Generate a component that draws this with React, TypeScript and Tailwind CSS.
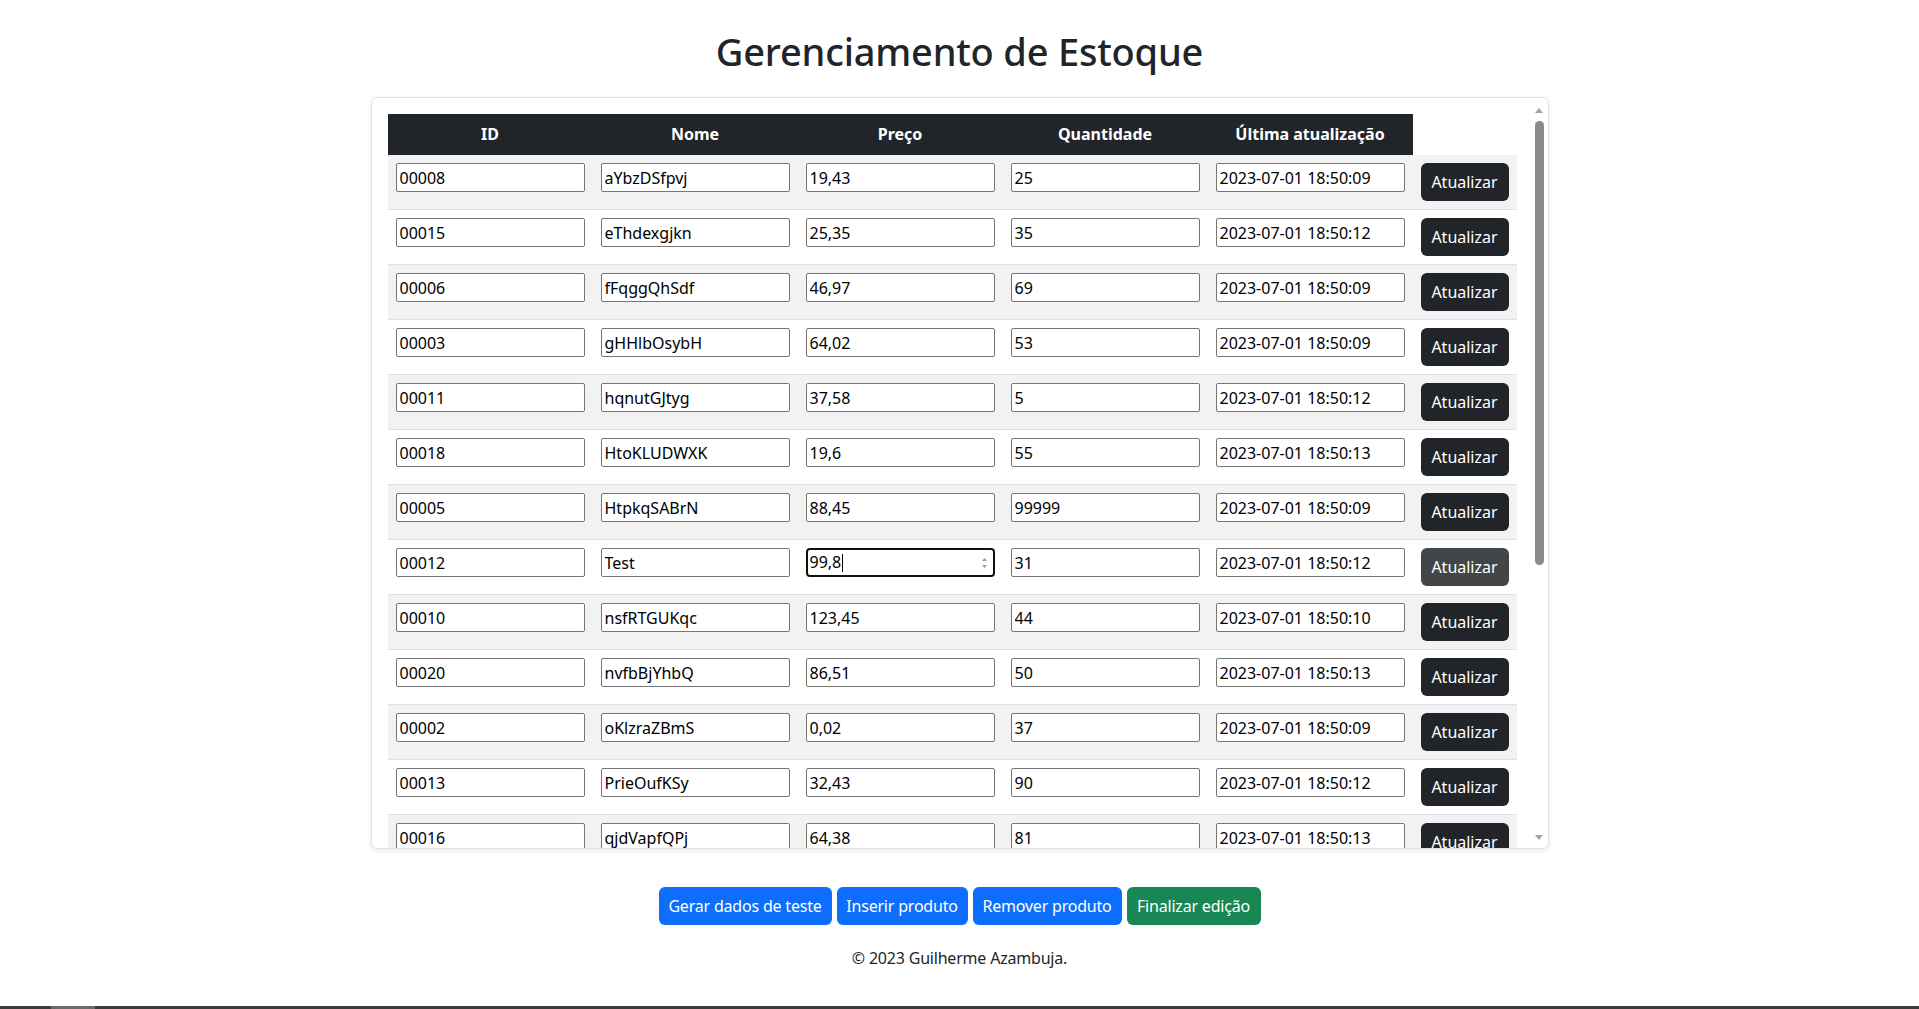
import React from 'react';

type Produto = {
  id: string;
  nome: string;
  preco: string;
  qtd: string;
  data: string;
};

const produtos: Produto[] = [
  { id: '00008', nome: 'aYbzDSfpvj', preco: '19,43', qtd: '25', data: '2023-07-01 18:50:09' },
  { id: '00015', nome: 'eThdexgjkn', preco: '25,35', qtd: '35', data: '2023-07-01 18:50:12' },
  { id: '00006', nome: 'fFqggQhSdf', preco: '46,97', qtd: '69', data: '2023-07-01 18:50:09' },
  { id: '00003', nome: 'gHHlbOsybH', preco: '64,02', qtd: '53', data: '2023-07-01 18:50:09' },
  { id: '00011', nome: 'hqnutGJtyg', preco: '37,58', qtd: '5', data: '2023-07-01 18:50:12' },
  { id: '00018', nome: 'HtoKLUDWXK', preco: '19,6', qtd: '55', data: '2023-07-01 18:50:13' },
  { id: '00005', nome: 'HtpkqSABrN', preco: '88,45', qtd: '99999', data: '2023-07-01 18:50:09' },
  { id: '00012', nome: 'Test', preco: '99,8', qtd: '31', data: '2023-07-01 18:50:12' },
  { id: '00010', nome: 'nsfRTGUKqc', preco: '123,45', qtd: '44', data: '2023-07-01 18:50:10' },
  { id: '00020', nome: 'nvfbBjYhbQ', preco: '86,51', qtd: '50', data: '2023-07-01 18:50:13' },
  { id: '00002', nome: 'oKlzraZBmS', preco: '0,02', qtd: '37', data: '2023-07-01 18:50:09' },
  { id: '00013', nome: 'PrieOufKSy', preco: '32,43', qtd: '90', data: '2023-07-01 18:50:12' },
  { id: '00016', nome: 'qjdVapfQPj', preco: '64,38', qtd: '81', data: '2023-07-01 18:50:13' },
];

const headers = ['ID', 'Nome', 'Preço', 'Quantidade', 'Última atualização'];

// the row being edited in the screenshot
const FOCUSED_ID = '00012';

function Campo({ value }: { value: string }) {
  return (
    <input
      readOnly
      defaultValue={value}
      className="block h-[29px] w-[189px] rounded-[2px] border border-[#767676] bg-white px-[3px] pt-px text-[16px] leading-[21px] text-black outline-none"
    />
  );
}

function CampoFocado({ value }: { value: string }) {
  return (
    <div className="flex h-[29px] w-[189px] items-center rounded-[4px] border-2 border-[#101010] bg-white pt-px pl-[2px] pr-[5px] text-[16px] leading-[21px] text-black">
      <span>{value}</span>
      <span className="ml-px h-[18px] w-px bg-black" />
      <span className="flex-1" />
      <svg width="7" height="14" viewBox="0 0 7 14" className="text-[#9a9a9a]">
        <path d="M3.5 2 L6 5 L1 5 Z" fill="currentColor" />
        <path d="M3.5 12 L6 9 L1 9 Z" fill="currentColor" />
      </svg>
    </div>
  );
}

function Scrollbar() {
  return (
    <div className="flex w-[17px] flex-col items-center pt-[10px] pb-[8px]">
      <svg width="8" height="5" viewBox="0 0 8 5" className="text-[#a3a3a3]">
        <path d="M4 0 L8 5 L0 5 Z" fill="currentColor" />
      </svg>
      <div className="mt-[8px] h-[444px] w-[9px] rounded-full bg-[#8a8a8a]" />
      <div className="flex-1" />
      <svg width="8" height="5" viewBox="0 0 8 5" className="text-[#a3a3a3]">
        <path d="M0 0 L8 0 L4 5 Z" fill="currentColor" />
      </svg>
    </div>
  );
}

export default function App() {
  return (
    <div className="flex h-[1009px] flex-col overflow-hidden bg-white font-['Noto_Sans','Open_Sans',sans-serif] text-[#212529]">
      <h1 className="mt-[27px] mb-[22px] text-center text-[38px] font-medium leading-[48px] tracking-[-0.2px]">
        Gerenciamento de Estoque
      </h1>

      {/* Tabela de produtos */}
      <div className="mx-auto flex h-[752px] w-[1178px] shrink-0 overflow-hidden rounded-md border border-[#dee2e6] bg-white shadow-[0_2px_4px_rgba(0,0,0,0.08)]">
        <div className="flex-1 overflow-hidden pt-4 pl-4">
          <table className="w-[1129px] table-fixed border-collapse">
            <colgroup>
              <col className="w-[205px]" />
              <col className="w-[205px]" />
              <col className="w-[205px]" />
              <col className="w-[205px]" />
              <col className="w-[205px]" />
              <col className="w-[104px]" />
            </colgroup>
            <thead>
              <tr>
                {headers.map((h) => (
                  <th
                    key={h}
                    className="border-b border-[#212529] bg-[#212529] px-2 py-2 text-center text-[16px] leading-6 font-bold text-white"
                  >
                    {h}
                  </th>
                ))}
                <th />
              </tr>
            </thead>
            <tbody>
              {produtos.map((p, i) => {
                const focado = p.id === FOCUSED_ID;
                return (
                  <tr
                    key={p.id}
                    className={
                      i % 2 === 0
                        ? 'border-b border-[#dee2e6] bg-[#f2f2f2]'
                        : 'border-b border-[#dee2e6] bg-white'
                    }
                  >
                    <td className="p-2 align-top">
                      <Campo value={p.id} />
                    </td>
                    <td className="p-2 align-top">
                      <Campo value={p.nome} />
                    </td>
                    <td className="p-2 align-top">
                      {focado ? <CampoFocado value={p.preco} /> : <Campo value={p.preco} />}
                    </td>
                    <td className="p-2 align-top">
                      <Campo value={p.qtd} />
                    </td>
                    <td className="p-2 align-top">
                      <Campo value={p.data} />
                    </td>
                    <td className="p-2 align-top">
                      <button
                        className={
                          focado
                            ? 'h-[38px] w-[88px] rounded-md bg-[#424649] text-[16px] leading-6 text-white'
                            : 'h-[38px] w-[88px] rounded-md bg-[#212529] text-[16px] leading-6 text-white'
                        }
                      >
                        Atualizar
                      </button>
                    </td>
                  </tr>
                );
              })}
            </tbody>
          </table>
        </div>
        <Scrollbar />
      </div>

      {/* Ações */}
      <div className="mt-[38px] flex justify-center gap-[5px]">
        <button className="h-[38px] w-[173px] rounded-md bg-[#0d6efd] text-[16px] leading-6 tracking-[-0.2px] text-white">
          Gerar dados de teste
        </button>
        <button className="h-[38px] w-[131px] rounded-md bg-[#0d6efd] text-[16px] leading-6 tracking-[-0.2px] text-white">
          Inserir produto
        </button>
        <button className="h-[38px] w-[149px] rounded-md bg-[#0d6efd] text-[16px] leading-6 tracking-[-0.2px] text-white">
          Remover produto
        </button>
        <button className="h-[38px] w-[134px] rounded-md bg-[#198754] text-[16px] leading-6 tracking-[-0.2px] text-white">
          Finalizar edição
        </button>
      </div>

      <footer className="mt-[21px] text-center text-[16px] leading-6 tracking-[-0.2px]">
        © 2023 Guilherme Azambuja.
      </footer>

      {/* barra de rolagem horizontal da página */}
      <div className="mt-auto flex h-[3px] bg-[#3b3b3b]">
        <div className="w-[51px]" />
        <div className="w-[44px] bg-[#6b6b6b]" />
      </div>
    </div>
  );
}
